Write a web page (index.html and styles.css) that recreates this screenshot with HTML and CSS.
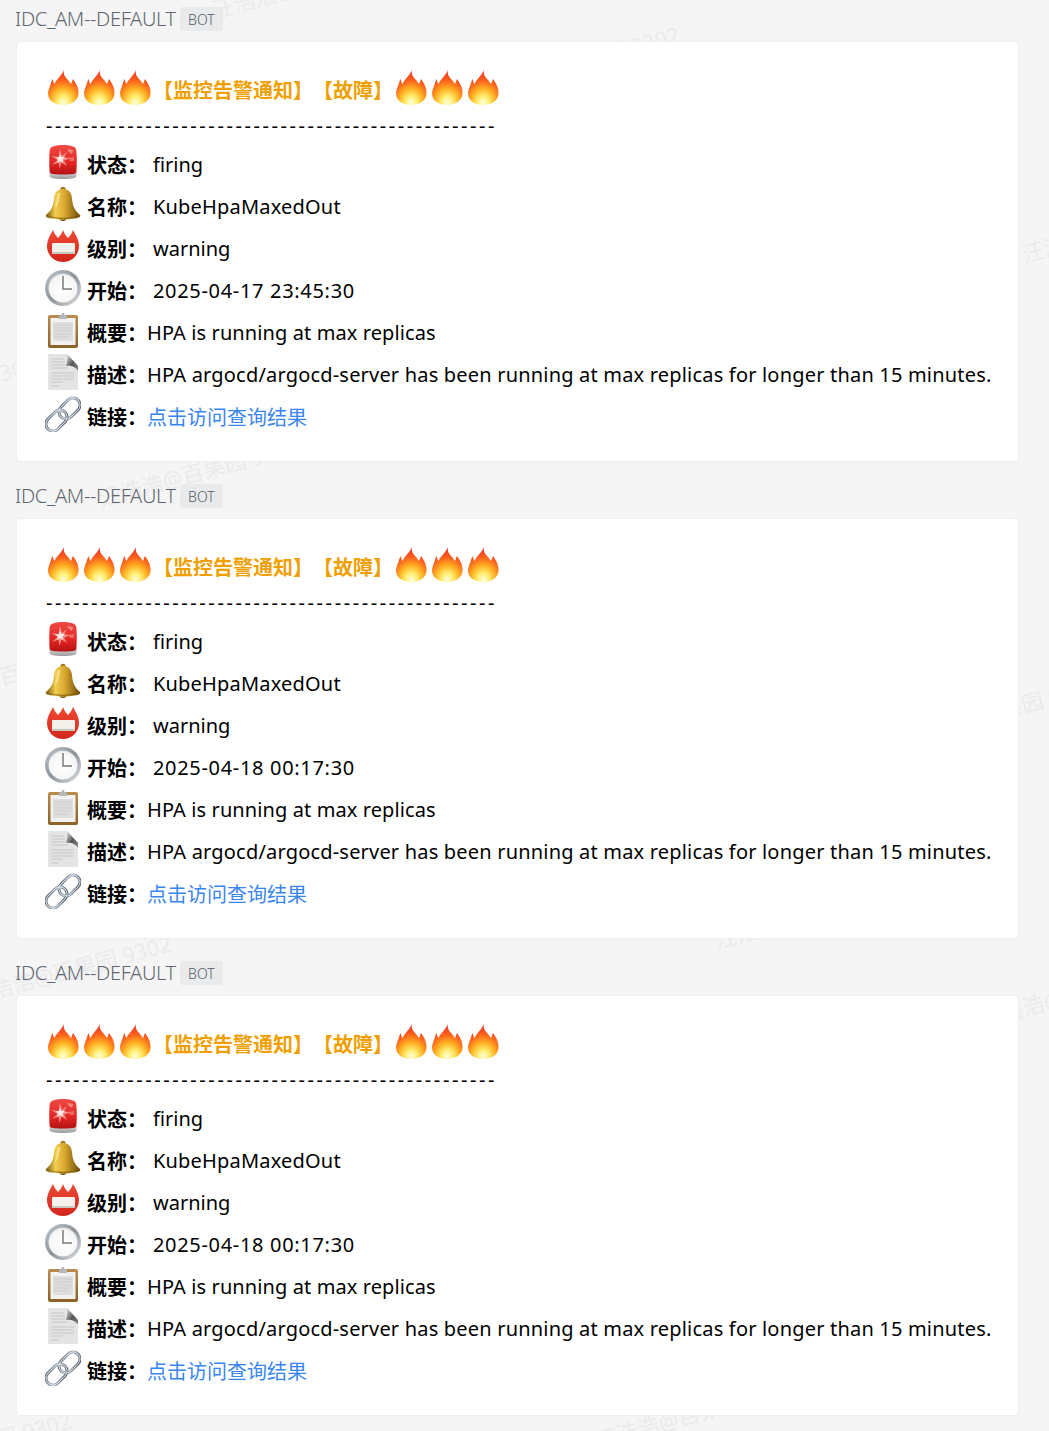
FILE: index.html
```html
<!DOCTYPE html>
<html lang="zh-CN">
<head>
<meta charset="utf-8">
<title>IDC_AM--DEFAULT</title>
<link rel="stylesheet" href="styles.css">
</head>
<body>
<svg class="icon-defs" xmlns="http://www.w3.org/2000/svg" aria-hidden="true">
  <defs>
    <radialGradient id="g-fire" cx="0.5" cy="0.93" r="0.85">
      <stop offset="0" stop-color="#fffde0"/><stop offset="0.22" stop-color="#ffee70"/><stop offset="0.48" stop-color="#ffae20"/><stop offset="0.75" stop-color="#fb601c"/><stop offset="1" stop-color="#ee3a22"/>
    </radialGradient>
    <linearGradient id="g-siren" x1="0" y1="0" x2="0" y2="1">
      <stop offset="0" stop-color="#ee4a46"/><stop offset="0.6" stop-color="#e32622"/><stop offset="1" stop-color="#b41214"/>
    </linearGradient>
    <linearGradient id="g-base" x1="0" y1="0" x2="0" y2="1">
      <stop offset="0" stop-color="#e2e2e2"/><stop offset="1" stop-color="#9a9a9a"/>
    </linearGradient>
    <linearGradient id="g-bell" x1="0" y1="0" x2="1" y2="0">
      <stop offset="0" stop-color="#7a5a10"/><stop offset="0.28" stop-color="#f2cd50"/><stop offset="0.55" stop-color="#d9a830"/><stop offset="1" stop-color="#6a4a08"/>
    </linearGradient>
    <linearGradient id="g-badge" x1="0" y1="0" x2="0" y2="1">
      <stop offset="0" stop-color="#ee4a34"/><stop offset="1" stop-color="#d2261c"/>
    </linearGradient>
    <linearGradient id="g-ring" x1="0" y1="0" x2="1" y2="1">
      <stop offset="0" stop-color="#c0c8d0"/><stop offset="0.5" stop-color="#8c9298"/><stop offset="1" stop-color="#e2e4e6"/>
    </linearGradient>
    <radialGradient id="g-face" cx="0.5" cy="0.55" r="0.6">
      <stop offset="0" stop-color="#ffffff"/><stop offset="0.78" stop-color="#f6f6f6"/><stop offset="1" stop-color="#cfcfcf"/>
    </radialGradient>
    <linearGradient id="g-fold" x1="0" y1="0" x2="1" y2="1">
      <stop offset="0" stop-color="#e6e6e6"/><stop offset="0.55" stop-color="#555555"/><stop offset="1" stop-color="#8a8a8a"/>
    </linearGradient>
    <linearGradient id="g-chain" x1="0" y1="0" x2="1" y2="1">
      <stop offset="0" stop-color="#55606c"/><stop offset="0.5" stop-color="#a9b6c4"/><stop offset="1" stop-color="#454e59"/>
    </linearGradient>
    <linearGradient id="g-clip" x1="0" y1="0" x2="0" y2="1">
      <stop offset="0" stop-color="#b98c50"/><stop offset="1" stop-color="#8d6229"/>
    </linearGradient>
    <symbol id="i-fire" viewBox="0 0 36 36">
      <path fill="url(#g-fire)" d="M19 0C18 4 20 7 23 10 24 11 25 13 26 14 27 12 27 11 28 9 31 13 34 18 33.500 24 33 31 26 35 18 35 10 35 3.500 31 3 24 2.800 20 5 17 6 13 6.500 11 7 10 8 9 8 11 8.500 13 9.500 14 11 10 14 8 16 5 17 3.500 18 2 19 0Z"/>
    </symbol>
    <symbol id="i-siren" viewBox="0 0 36 36">
      <path fill="url(#g-base)" d="M4.500 27H31.500V32C31.500 34 27 35 18 35S4.500 34 4.500 32Z"/>
      <path fill="url(#g-siren)" d="M5 29C4 27 4 8 5 5 6 2 12 1 18 1S30 2 31 5C32 8 32 27 31 29 29 31 7 31 5 29Z"/>
      <path fill="#f9a8a2" opacity=".8" d="M15 5 17 12 22 8 19 13.500 26 14 19 16.500 22 22 16.500 18.500 14.500 25 13.500 18.500 7 21 12.500 16 6.500 12 13.500 13Z"/>
      <path fill="#ffe9e6" d="M15 10 16.500 13 20 13 17.500 15.500 18 19 15 17 12 19 13 15.500 10.500 13.500 14 13Z"/>
      <path fill="#f59a92" opacity=".8" d="M22 5 28 6 27 10 24 8Z"/>
      <path fill="#f59a92" opacity=".55" d="M24 14 29 13 29 17 25 17Z"/>
    </symbol>
    <symbol id="i-bell" viewBox="0 0 36 36">
      <circle cx="18" cy="31.500" r="3.500" fill="#5e4208"/>
      <path fill="#a07616" d="M15.500 3C15.500 0 20.500 0 20.500 3V5H15.500Z"/>
      <path fill="url(#g-bell)" d="M18 3C24 3 26.500 7 27 12 27.500 19 29 24 35 29 36 30.500 34 32 30 32.500 22 34 14 34 6 32.500 2 32 0 30.500 1 29 7 24 8.500 19 9 12 9.500 7 12 3 18 3Z"/>
      <path fill="#fff3b8" opacity=".6" d="M13 7C11.500 10 11.500 18 10 23 14 18 14 12 15.500 7Z"/>
      <path fill="#5e4208" opacity=".55" d="M3 29.500C12 32.500 24 32.500 33 29.500 33 31 24 33 18 33S3 31 3 29.500Z"/>
    </symbol>
    <symbol id="i-badge" viewBox="0 0 36 36">
      <path fill="url(#g-badge)" d="M2 18C2 13 4 9 8 2 9 5 11 8 13 10 15 8 17 5 18 2 19 5 21 8 23 10 25 8 27 5 28 2 32 9 34 13 34 18 34 27 27 34 18 34S2 27 2 18Z"/>
      <rect x="7" y="15" width="23" height="11" rx="1" fill="#f3f1ec"/>
      <rect x="7" y="24" width="23" height="2" fill="#c9c6bf"/>
    </symbol>
    <symbol id="i-clock" viewBox="0 0 36 36">
      <circle cx="18" cy="18" r="18" fill="url(#g-ring)"/>
      <circle cx="18" cy="18" r="14.500" fill="url(#g-face)"/>
      <path d="M18 6V19H27" fill="none" stroke="#7a7a7a" stroke-width="1.500"/>
    </symbol>
    <symbol id="i-clipboard" viewBox="0 0 36 36">
      <rect x="3" y="3" width="30" height="33" rx="2" fill="url(#g-clip)"/>
      <rect x="5.500" y="6" width="25" height="27" fill="#f1f1f0"/>
      <rect x="8" y="10" width="20" height="19" fill="#dedede"/>
      <path d="M14 5C14 3 15.500 3 16.500 3 16.500 0 19.500 0 19.500 3 20.500 3 22 3 22 5V7H14Z" fill="#b4b8bc"/>
      <path d="M9 13H27M9 16H27M9 19H27M9 22H26M9 25H22" stroke="#cbcbcb" stroke-width="1"/>
    </symbol>
    <symbol id="i-doc" viewBox="0 0 36 36">
      <path fill="#e4e4e4" d="M3 0H22L33 12V36H3Z"/>
      <path d="M6 5H19M6 8H20M6 11H20M6 14H22M6 19H29M6 22H29M6 25H29M6 28H18M6 32H14" stroke="#c6c6c6" stroke-width="1"/>
      <path fill="url(#g-fold)" d="M22 0C23 5 22 9 21 12 26 11 31 13 33 17V12Z"/>
    </symbol>
    <symbol id="i-link" viewBox="0 0 36 36">
      <g fill="none" stroke="url(#g-chain)" stroke-width="3">
        <rect width="24" height="14" rx="7" transform="translate(24.500 12.500) rotate(-45) translate(-12 -7)"/>
        <rect width="24" height="14" rx="7" transform="translate(11.500 24.500) rotate(-45) translate(-12 -7)"/>
      </g>
      <g fill="none" stroke="#f0f4f8" stroke-width=".8">
        <rect width="24" height="14" rx="7" transform="translate(24.500 12.500) rotate(-45) translate(-12 -7)"/>
        <rect width="24" height="14" rx="7" transform="translate(11.500 24.500) rotate(-45) translate(-12 -7)"/>
      </g>
    </symbol>
  </defs>
</svg>

<div class="watermarks" aria-hidden="true">
  <span class="wm wm-1">汪浩浩@百果园 9302</span>
  <span class="wm wm-2">汪浩浩@百果园 9302</span>
  <span class="wm wm-3">汪浩浩@百果园 9302</span>
  <span class="wm wm-4">汪浩浩@百果园 9302</span>
  <span class="wm wm-5">汪浩浩@百果园 9302</span>
  <span class="wm wm-6">汪浩浩@百果园 9302</span>
  <span class="wm wm-7">汪浩浩@百果园 9302</span>
  <span class="wm wm-8">汪浩浩@百果园 9302</span>
  <span class="wm wm-9">汪浩浩@百果园 9302</span>
  <span class="wm wm-10">汪浩浩@百果园 9302</span>
  <span class="wm wm-11">汪浩浩@百果园 9302</span>
  <span class="wm wm-12">汪浩浩@百果园 9302</span>
</div>

<main class="feed">
  <article class="message">
    <header class="sender"><span class="sender-name">IDC_AM--DEFAULT</span><span class="bot-tag">BOT</span></header>
    <section class="card">
      <h2 class="title"><svg class="icon"><use href="#i-fire"/></svg><svg class="icon"><use href="#i-fire"/></svg><svg class="icon"><use href="#i-fire"/></svg><span class="title-text">【监控告警通知】</span><span class="title-text">【故障】</span><svg class="icon"><use href="#i-fire"/></svg><svg class="icon"><use href="#i-fire"/></svg><svg class="icon"><use href="#i-fire"/></svg></h2>
      <p class="divider">--------------------------------------------------</p>
      <div class="row"><svg class="icon"><use href="#i-siren"/></svg><b class="label">状态：</b><span class="value spaced">firing</span></div>
      <div class="row"><svg class="icon"><use href="#i-bell"/></svg><b class="label">名称：</b><span class="value spaced wide">KubeHpaMaxedOut</span></div>
      <div class="row"><svg class="icon"><use href="#i-badge"/></svg><b class="label">级别：</b><span class="value spaced">warning</span></div>
      <div class="row"><svg class="icon"><use href="#i-clock"/></svg><b class="label">开始：</b><span class="value spaced date">2025-04-17 23:45:30</span></div>
      <div class="row"><svg class="icon"><use href="#i-clipboard"/></svg><b class="label">概要：</b><span class="value narrow">HPA is running at max replicas</span></div>
      <div class="row"><svg class="icon"><use href="#i-doc"/></svg><b class="label">描述：</b><span class="value wide">HPA argocd/argocd-server has been running at max replicas for longer than 15 minutes.</span></div>
      <div class="row"><svg class="icon"><use href="#i-link"/></svg><b class="label">链接：</b><a class="value link" href="#">点击访问查询结果</a></div>
    </section>
  </article>
  <article class="message">
    <header class="sender"><span class="sender-name">IDC_AM--DEFAULT</span><span class="bot-tag">BOT</span></header>
    <section class="card">
      <h2 class="title"><svg class="icon"><use href="#i-fire"/></svg><svg class="icon"><use href="#i-fire"/></svg><svg class="icon"><use href="#i-fire"/></svg><span class="title-text">【监控告警通知】</span><span class="title-text">【故障】</span><svg class="icon"><use href="#i-fire"/></svg><svg class="icon"><use href="#i-fire"/></svg><svg class="icon"><use href="#i-fire"/></svg></h2>
      <p class="divider">--------------------------------------------------</p>
      <div class="row"><svg class="icon"><use href="#i-siren"/></svg><b class="label">状态：</b><span class="value spaced">firing</span></div>
      <div class="row"><svg class="icon"><use href="#i-bell"/></svg><b class="label">名称：</b><span class="value spaced wide">KubeHpaMaxedOut</span></div>
      <div class="row"><svg class="icon"><use href="#i-badge"/></svg><b class="label">级别：</b><span class="value spaced">warning</span></div>
      <div class="row"><svg class="icon"><use href="#i-clock"/></svg><b class="label">开始：</b><span class="value spaced date">2025-04-18 00:17:30</span></div>
      <div class="row"><svg class="icon"><use href="#i-clipboard"/></svg><b class="label">概要：</b><span class="value narrow">HPA is running at max replicas</span></div>
      <div class="row"><svg class="icon"><use href="#i-doc"/></svg><b class="label">描述：</b><span class="value wide">HPA argocd/argocd-server has been running at max replicas for longer than 15 minutes.</span></div>
      <div class="row"><svg class="icon"><use href="#i-link"/></svg><b class="label">链接：</b><a class="value link" href="#">点击访问查询结果</a></div>
    </section>
  </article>
  <article class="message">
    <header class="sender"><span class="sender-name">IDC_AM--DEFAULT</span><span class="bot-tag">BOT</span></header>
    <section class="card">
      <h2 class="title"><svg class="icon"><use href="#i-fire"/></svg><svg class="icon"><use href="#i-fire"/></svg><svg class="icon"><use href="#i-fire"/></svg><span class="title-text">【监控告警通知】</span><span class="title-text">【故障】</span><svg class="icon"><use href="#i-fire"/></svg><svg class="icon"><use href="#i-fire"/></svg><svg class="icon"><use href="#i-fire"/></svg></h2>
      <p class="divider">--------------------------------------------------</p>
      <div class="row"><svg class="icon"><use href="#i-siren"/></svg><b class="label">状态：</b><span class="value spaced">firing</span></div>
      <div class="row"><svg class="icon"><use href="#i-bell"/></svg><b class="label">名称：</b><span class="value spaced wide">KubeHpaMaxedOut</span></div>
      <div class="row"><svg class="icon"><use href="#i-badge"/></svg><b class="label">级别：</b><span class="value spaced">warning</span></div>
      <div class="row"><svg class="icon"><use href="#i-clock"/></svg><b class="label">开始：</b><span class="value spaced date">2025-04-18 00:17:30</span></div>
      <div class="row"><svg class="icon"><use href="#i-clipboard"/></svg><b class="label">概要：</b><span class="value narrow">HPA is running at max replicas</span></div>
      <div class="row"><svg class="icon"><use href="#i-doc"/></svg><b class="label">描述：</b><span class="value wide">HPA argocd/argocd-server has been running at max replicas for longer than 15 minutes.</span></div>
      <div class="row"><svg class="icon"><use href="#i-link"/></svg><b class="label">链接：</b><a class="value link" href="#">点击访问查询结果</a></div>
    </section>
  </article>
</main>
</body>
</html>
```

FILE: styles.css
```css
* { box-sizing: border-box; }

html, body { margin: 0; padding: 0; }

body {
  position: relative;
  width: 1049px;
  height: 1431px;
  overflow: hidden;
  background: #f5f5f5;
  font-family: "Noto Sans", "Noto Sans CJK SC", sans-serif;
  color: #000;
}

.icon-defs { display: block; width: 0; height: 0; }

.watermarks { position: absolute; inset: 0; overflow: hidden; }

.wm {
  position: absolute;
  white-space: nowrap;
  font-size: 22px;
  line-height: 28px;
  color: #eaeaed;
  transform: rotate(-15deg);
  transform-origin: left center;
}
.wm-1 { left: 212px; top: -4px; }
.wm-2 { left: 478px; top: 73px; }
.wm-3 { left: 1022px; top: 240px; }
.wm-4 { left: -165px; top: 403px; }
.wm-5 { left: 99px; top: 484px; }
.wm-6 { left: -84px; top: 685px; }
.wm-7 { left: 896px; top: 724px; }
.wm-8 { left: -30px; top: 982px; }
.wm-9 { left: 715px; top: 926px; }
.wm-10 { left: 980px; top: 1005px; }
.wm-11 { left: -130px; top: 1459px; }
.wm-12 { left: 595px; top: 1426px; }

.feed {
  position: relative;
  padding: 7px 30px 0 16px;
  display: flex;
  flex-direction: column;
  gap: 22px;
}

.sender {
  display: flex;
  align-items: center;
  gap: 4px;
  height: 24px;
  margin: 0 0 10px -1px;
}

.sender-name {
  font-size: 20px;
  line-height: 24px;
  font-weight: 300;
  color: #5f6670;
  letter-spacing: -0.33px;
}

.bot-tag {
  display: flex;
  align-items: center;
  justify-content: center;
  width: 43px;
  height: 24px;
  background: #e9eaec;
  border-radius: 3px;
  font-size: 14px;
  font-weight: 300;
  color: #555b66;
}

.card {
  height: 421px;
  padding: 26px 0 0 28px;
  background: #fff;
  border: 1px solid #eeeeee;
  border-radius: 4px;
}

.title {
  display: flex;
  align-items: flex-start;
  height: 42px;
  margin: 0;
  font-size: 20px;
  font-weight: 700;
  line-height: 44px;
  color: #ef9f00;
}

.title .icon { margin-top: 2px; }

.title-text { font-family: "Noto Sans CJK SC", sans-serif; }

.divider {
  height: 34px;
  margin: 0 0 0 1px;
  font-size: 20px;
  line-height: 32px;
  letter-spacing: 2.58px;
}

.icon { display: block; flex: none; width: 36px; height: 36px; }

.row {
  display: flex;
  align-items: flex-start;
  height: 42px;
  font-size: 20px;
  line-height: 42px;
  white-space: nowrap;
}

.label {
  font-family: "Noto Sans CJK SC", sans-serif;
  font-weight: 700;
  margin-left: 6px;
  width: 60px;
  flex: none;
}

.value.spaced { margin-left: 6px; }
.value.wide { letter-spacing: 0.19px; }
.value.narrow { letter-spacing: 0.1px; }
.value.date { letter-spacing: 0.68px; }

.link {
  color: #3a86f0;
  text-decoration: none;
  font-family: "Noto Sans CJK SC", sans-serif;
  font-weight: 400;
}
```
